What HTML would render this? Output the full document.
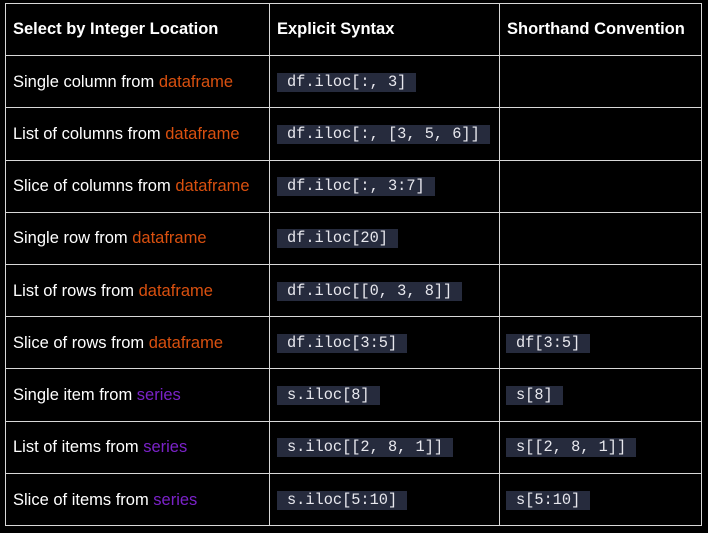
<!DOCTYPE html>
<html><head><style>
body{margin:0;background:#000;width:708px;height:533px;position:relative;overflow:hidden;font-family:"Liberation Sans",sans-serif;color:#fff}
.h{position:absolute;left:5px;width:697px;height:1px;background:#d8d8d8}
.v{position:absolute;top:3px;height:523px;width:1px;background:#d8d8d8}
.t{position:absolute;font-size:16.5px;line-height:20px;white-space:nowrap}
.b{font-weight:bold;font-size:16.5px}
.c{position:absolute;background:#262b3d;height:19px;line-height:19px;font-family:"Liberation Mono",monospace;font-size:15.3px;padding:0 10px;color:#e8e8ee;white-space:pre}
.o{color:#d9500f}.p{color:#7a22c8}
</style></head><body>
<div class="h" style="top:3px"></div><div class="h" style="top:55px"></div><div class="h" style="top:107px"></div><div class="h" style="top:160px"></div><div class="h" style="top:212px"></div><div class="h" style="top:264px"></div><div class="h" style="top:316px"></div><div class="h" style="top:368px"></div><div class="h" style="top:421px"></div><div class="h" style="top:473px"></div><div class="h" style="top:525px"></div>
<div class="v" style="left:5px"></div><div class="v" style="left:269px"></div><div class="v" style="left:499px"></div><div class="v" style="left:701px"></div>
<div class="t b" style="left:13px;top:19px">Select by Integer Location</div>
<div class="t b" style="left:277px;top:19px">Explicit Syntax</div>
<div class="t b" style="left:507px;top:19px">Shorthand Convention</div>

<div class="t" style="left:13px;top:72px">Single column from <span class="o">dataframe</span></div>
<div class="c" style="left:277px;top:73px">df.iloc[:, 3]</div>
<div class="t" style="left:13px;top:124px">List of columns from <span class="o">dataframe</span></div>
<div class="c" style="left:277px;top:125px">df.iloc[:, [3, 5, 6]]</div>
<div class="t" style="left:13px;top:176px">Slice of columns from <span class="o">dataframe</span></div>
<div class="c" style="left:277px;top:177px">df.iloc[:, 3:7]</div>
<div class="t" style="left:13px;top:228px">Single row from <span class="o">dataframe</span></div>
<div class="c" style="left:277px;top:229px">df.iloc[20]</div>
<div class="t" style="left:13px;top:281px">List of rows from <span class="o">dataframe</span></div>
<div class="c" style="left:277px;top:282px">df.iloc[[0, 3, 8]]</div>
<div class="t" style="left:13px;top:333px">Slice of rows from <span class="o">dataframe</span></div>
<div class="c" style="left:277px;top:334px">df.iloc[3:5]</div>
<div class="c" style="left:506px;top:334px">df[3:5]</div>
<div class="t" style="left:13px;top:385px">Single item from <span class="p">series</span></div>
<div class="c" style="left:277px;top:386px">s.iloc[8]</div>
<div class="c" style="left:506px;top:386px">s[8]</div>
<div class="t" style="left:13px;top:437px">List of items from <span class="p">series</span></div>
<div class="c" style="left:277px;top:438px">s.iloc[[2, 8, 1]]</div>
<div class="c" style="left:506px;top:438px">s[[2, 8, 1]]</div>
<div class="t" style="left:13px;top:490px">Slice of items from <span class="p">series</span></div>
<div class="c" style="left:277px;top:491px">s.iloc[5:10]</div>
<div class="c" style="left:506px;top:491px">s[5:10]</div>
</body></html>
